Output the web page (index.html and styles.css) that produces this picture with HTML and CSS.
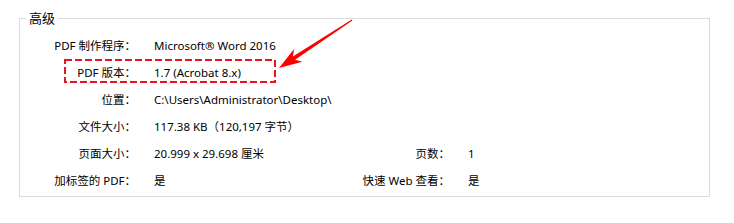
FILE: index.html
```html
<!DOCTYPE html>
<html lang="zh-CN">
<head>
  <meta charset="UTF-8">
  <title>高级</title>
  <link rel="stylesheet" href="styles.css">
</head>
<body>

<div class="group">
  <span class="legend">高级</span>
  <div class="props">
    <div class="label">PDF 制作程序：</div>
    <div class="value">Microsoft® Word 2016</div>
    <div></div><div></div>

    <div class="label">PDF 版本：</div>
    <div class="value">1.7 (Acrobat 8.x)</div>
    <div></div><div></div>

    <div class="label">位置：</div>
    <div class="value">C:\Users\Administrator\Desktop\</div>
    <div></div><div></div>

    <div class="label">文件大小：</div>
    <div class="value">117.38 KB（120,197 字节）</div>
    <div></div><div></div>

    <div class="label">页面大小：</div>
    <div class="value">20.999 x 29.698 厘米</div>
    <div class="label">页数：</div>
    <div class="value">1</div>

    <div class="label">加标签的 PDF：</div>
    <div class="value">是</div>
    <div class="label">快速 Web 查看：</div>
    <div class="value">是</div>
  </div>
</div>

<svg class="marks" width="734" height="223" viewBox="0 0 734 223">
  <rect x="65" y="60" width="210" height="22" fill="none" stroke="#e8141c" stroke-width="2" stroke-dasharray="7 3"/>
  <polygon fill="#ff0000" points="279,68 302.3,61.7 295.1,59.8 352.4,20.4 351.8,19.6 292.9,56.4 294.1,49.1"/>
</svg>

</body>
</html>
```

FILE: styles.css
```css
body {
  margin: 0;
  background: #fff;
  font-family: "Noto Sans", "Noto Sans CJK SC", sans-serif;
  font-size: 11.5px;
  color: #000;
  position: relative;
  width: 734px;
  height: 223px;
  overflow: hidden;
}
.group {
  position: relative;
  margin: 18px 24px 0 19px;
  height: 177px;
  border: 1px solid #dcdcdc;
}
.legend {
  position: absolute;
  top: -10px;
  left: 6px;
  padding: 0 3px;
  background: #fff;
  font-size: 13px;
  line-height: 18px;
}
.props {
  display: grid;
  grid-template-columns: 116px 182px 96px 1fr;
  column-gap: 18px;
  grid-auto-rows: 27px;
  padding-top: 13px;
  line-height: 27px;
  white-space: nowrap;
}
.label {
  text-align: right;
}
.marks {
  position: absolute;
  left: 0;
  top: 0;
  pointer-events: none;
}
```
